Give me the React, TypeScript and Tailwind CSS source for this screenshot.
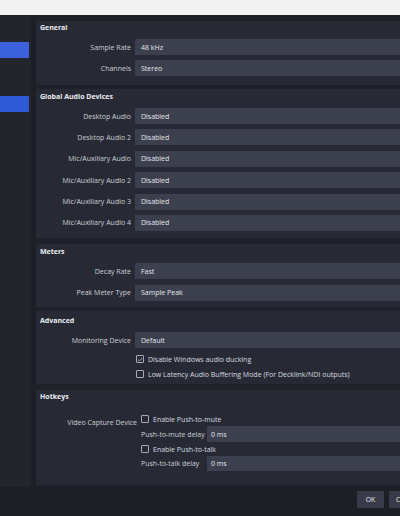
import React from "react";

type Row = { label: string; value: string };

const general: Row[] = [
  { label: "Sample Rate", value: "48 kHz" },
  { label: "Channels", value: "Stereo" },
];

const devices: Row[] = [
  { label: "Desktop Audio", value: "Disabled" },
  { label: "Desktop Audio 2", value: "Disabled" },
  { label: "Mic/Auxiliary Audio", value: "Disabled" },
  { label: "Mic/Auxiliary Audio 2", value: "Disabled" },
  { label: "Mic/Auxiliary Audio 3", value: "Disabled" },
  { label: "Mic/Auxiliary Audio 4", value: "Disabled" },
];

const meters: Row[] = [
  { label: "Decay Rate", value: "Fast" },
  { label: "Peak Meter Type", value: "Sample Peak" },
];

function Field({ label, value }: Row) {
  return (
    <div className="flex items-center h-[16px]">
      <span className="w-[99px] shrink-0 text-right pr-[4px] text-[#cdcfd6]">{label}</span>
      <div className="flex-1 h-full bg-[#3c404e] flex items-center pl-[6px] text-[#e6e7ec] whitespace-nowrap">
        {value}
      </div>
    </div>
  );
}

function Check({ checked, text }: { checked?: boolean; text: string }) {
  return (
    <div className="flex items-center h-[10px] gap-[4px] whitespace-nowrap text-[#d8dae0]">
      <span className="w-[8px] h-[8px] border border-[#a9abb3] rounded-[1px] flex items-center justify-center shrink-0">
        {checked && (
          <svg viewBox="0 0 8 8" className="w-[7px] h-[7px]">
            <path d="M1.3 4.1 L3.2 5.9 L6.7 2" fill="none" stroke="#e6e7ea" strokeWidth={0.9} />
          </svg>
        )}
      </span>
      {text}
    </div>
  );
}

function Group({ title, children, className }: { title: string; children: React.ReactNode; className?: string }) {
  return (
    <section className={`bg-[#272a34] ${className ?? ""}`}>
      <h3 className="h-[10px] leading-[10px] pl-[4px] font-bold text-[#eceef2]">{title}</h3>
      {children}
    </section>
  );
}

export default function App() {
  return (
    <div
      className="w-[400px] h-[516px] overflow-hidden bg-[#1e1f26] text-[7px] leading-none"
      style={{ fontFamily: '"Open Sans", "Noto Sans", sans-serif' }}
    >
      <div className="h-[15px] bg-[#f2f2f2]" />

      <div className="flex h-[472px]">
        {/* Sidebar */}
        <aside className="w-[31px] shrink-0 bg-[#23252d] pt-[27px]">
          <div className="h-[16px] w-[29px] bg-[#3b61dc] rounded-r-[1px]" />
          <div className="h-[16px] w-[29px] mt-[38px] bg-[#2f59d4] rounded-r-[1px]" />
        </aside>

        {/* Settings content */}
        <main className="flex-1 ml-[4px] bg-[#1f2028] pl-[1px] pt-[6px] flex flex-col">
          <Group title="General" className="h-[64px] pt-[2px]">
            <div className="mt-[6px] flex flex-col gap-[5px]">
              {general.map((r) => (
                <Field key={r.label} {...r} />
              ))}
            </div>
          </Group>

          <Group title="Global Audio Devices" className="mt-[4px] h-[149px] pt-[3px]">
            <div className="mt-[6px] flex flex-col gap-[5.4px]">
              {devices.map((r) => (
                <Field key={r.label} {...r} />
              ))}
            </div>
          </Group>

          <Group title="Meters" className="mt-[6px] h-[63px] pt-[3px]">
            <div className="mt-[6px] flex flex-col gap-[5.5px]">
              {meters.map((r) => (
                <Field key={r.label} {...r} />
              ))}
            </div>
          </Group>

          <Group title="Advanced" className="mt-[4px] h-[73px] pt-[5px]">
            <div className="mt-[6px]">
              <Field label="Monitoring Device" value="Default" />
            </div>
            <div className="pl-[100px] mt-[6px] flex flex-col gap-[5px]">
              <Check checked text="Disable Windows audio ducking" />
              <Check text="Low Latency Audio Buffering Mode (For Decklink/NDI outputs)" />
            </div>
          </Group>

          <Group title="Hotkeys" className="mt-[6px] h-[95px] pt-[2px]">
            <div className="flex mt-[12px]">
              <span className="w-[105px] shrink-0 text-right pr-[4px] text-[#cdcfd6] pt-[5px]">
                Video Capture Device
              </span>
              <div className="flex-1 flex flex-col">
                <Check text="Enable Push-to-mute" />
                <div className="flex items-center h-[16px] mt-[2px]">
                  <span className="w-[66px] shrink-0 whitespace-nowrap text-[#cdcfd6]">Push-to-mute delay</span>
                  <div className="flex-1 h-full bg-[#3c404e] flex items-center pl-[4px] text-[#e6e7ec]">0 ms</div>
                </div>
                <div className="mt-[2px]">
                  <Check text="Enable Push-to-talk" />
                </div>
                <div className="flex items-center h-[15px] mt-[2px]">
                  <span className="w-[66px] shrink-0 whitespace-nowrap text-[#cdcfd6]">Push-to-talk delay</span>
                  <div className="flex-1 h-full bg-[#3c404e] flex items-center pl-[4px] text-[#e6e7ec]">0 ms</div>
                </div>
              </div>
            </div>
          </Group>
        </main>
      </div>

      {/* Dialog buttons */}
      <footer className="h-[29px] flex items-start justify-end gap-[5px] pt-[4px] -mr-[29px]">
        <button className="w-[27px] h-[17px] bg-[#393c48] text-[#e6e7ec] flex items-center justify-center rounded-[1px]">
          OK
        </button>
        <button className="w-[40px] h-[17px] bg-[#393c48] text-[#e6e7ec] flex items-center justify-start pl-[7px] rounded-[1px]">
          Cancel
        </button>
      </footer>
    </div>
  );
}
